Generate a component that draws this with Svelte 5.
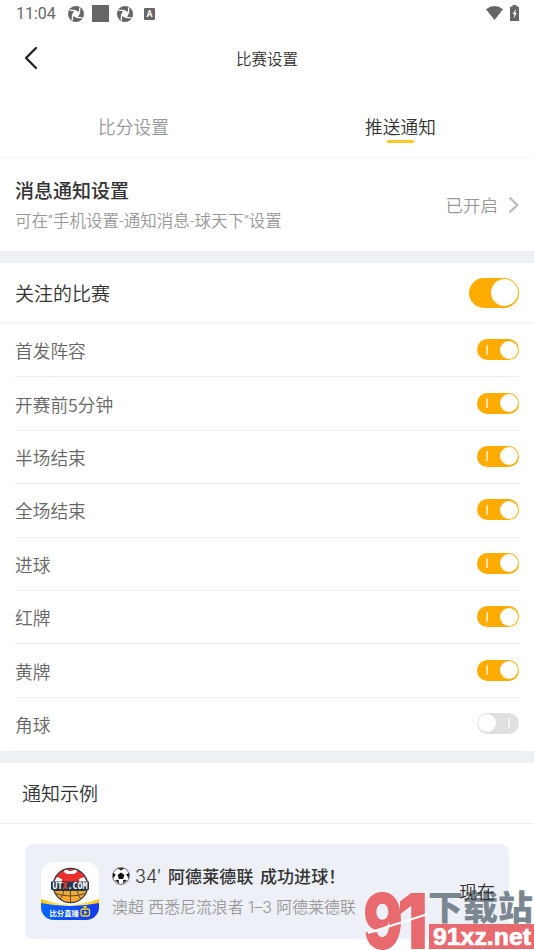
<script lang="ts">
	let master = $state(true);

	let items = $state([
		{ label: '首发阵容', on: true },
		{ label: '开赛前5分钟', on: true },
		{ label: '半场结束', on: true },
		{ label: '全场结束', on: true },
		{ label: '进球', on: true },
		{ label: '红牌', on: true },
		{ label: '黄牌', on: true },
		{ label: '角球', on: false }
	]);
</script>

{#snippet aperture()}
	<svg class="aperture" viewBox="0 0 16 16">
		<circle cx="8" cy="8" r="8" fill="#666" />
		<path d="M6.500 3.800 12.200 6.500 9.500 12.200 3.800 9.500Z" fill="#fff" />
		<path d="M7.500 4.600 1.500 4.200M11.400 7.500 11.800 1.500M8.500 11.400 14.500 11.800M4.600 8.500 4.200 14.500" stroke="#fff" stroke-width="1.300" />
	</svg>
{/snippet}

<div class="screen">
	<div class="status">
		<span class="time">11:04</span>
		{@render aperture()}
		<i class="square"></i>
		{@render aperture()}
		<span class="letter">A</span>
		<svg class="wifi" width="17" height="14" viewBox="0 0 17 14">
			<path d="M0 3.2Q8.5-3 17 3.2L8.5 14Z" fill="#666" />
		</svg>
		<svg width="9" height="16" viewBox="0 0 9 16">
			<path d="M2.5 0h4v1.5H8q1 0 1 1V16H0V2.500q0-1 1-1h1.500Z" fill="#666" />
			<path d="M5.800 4 2.700 9h1.700L3.800 13.500 6.800 7.800H5.200Z" fill="#fff" />
		</svg>
	</div>

	<header>
		<svg class="back" width="14" height="24" viewBox="0 0 14 24">
			<path d="M12 2 2 12 12 22" fill="none" stroke="#222" stroke-width="2.300" stroke-linecap="round" stroke-linejoin="round" />
		</svg>
		<h1>比赛设置</h1>
	</header>

	<nav>
		<span class="tab">比分设置</span>
		<span class="tab active">推送通知</span>
	</nav>

	<section class="notice">
		<div class="copy">
			<h2>消息通知设置</h2>
			<p>可在“手机设置-通知消息-球天下”设置</p>
		</div>
		<span class="enabled">已开启</span>
		<svg width="11" height="18" viewBox="0 0 11 18">
			<path d="M1.500 1.500 9.300 9 1.500 16.500" fill="none" stroke="#bbb" stroke-width="2.200" />
		</svg>
	</section>

	<div class="band"></div>

	<section class="follow">
		<span>关注的比赛</span>
		<button class="switch large" class:on={master} onclick={() => (master = !master)} aria-label="关注的比赛"></button>
	</section>

	<ul>
		{#each items as item}
			<li>
				<span>{item.label}</span>
				<button class="switch" class:on={item.on} onclick={() => (item.on = !item.on)} aria-label={item.label}></button>
			</li>
		{/each}
	</ul>

	<div class="band"></div>

	<h3>通知示例</h3>

	<div class="card">
		<svg class="logo" width="58" height="58" viewBox="0 0 58 58">
			<defs>
				<clipPath id="tile"><rect width="58" height="58" rx="13" /></clipPath>
				<clipPath id="ball"><circle cx="29.500" cy="23.500" r="17" /></clipPath>
				<linearGradient id="blue"><stop stop-color="#0864ff" /><stop offset="1" stop-color="#123bf0" /></linearGradient>
				<linearGradient id="gold"><stop stop-color="#ffc400" /><stop offset=".5" stop-color="#fff6c0" /><stop offset="1" stop-color="#ffc400" /></linearGradient>
			</defs>
			<g clip-path="url(#tile)">
				<rect width="58" height="58" fill="#fff" />
				<g clip-path="url(#ball)">
					<rect x="12" y="6" width="35" height="36" fill="#f6a92c" />
					<rect x="12" y="6" width="35" height="15" fill="#e9302b" />
					<path d="M24 6q2 3 5.500 3T35 6l1 4-3 2h-7l-3-2ZM13 20l3-5 5 2v3ZM46 20l-3-5-5 2v3Z" fill="#fff" />
					<path d="M29.500 27v14M23 27q-1 8-5 11M36 27q1 8 5 11M13 31q16 6 33 0" fill="none" stroke="#5b4a35" stroke-width="1" />
				</g>
				<circle cx="29.500" cy="23.500" r="17.200" fill="none" stroke="#343a45" stroke-width="1.300" />
				<path d="M10 19.500h38v8l-4 1.500H14l-4-1.500Z" fill="#27364b" />
				<text class="brand" x="11.500" y="27" textLength="35" lengthAdjust="spacingAndGlyphs">UT<tspan fill="#ff3b30">X</tspan>.COM</text>
				<path d="M0 37Q29 47 58 37V58H0Z" fill="url(#gold)" />
				<path d="M0 41Q29 47 58 41V58H0Z" fill="url(#blue)" />
				<text class="slogan" x="8.500" y="54" textLength="29.500">比分直播</text>
				<rect x="40" y="47" width="8.500" height="7" rx="2" fill="none" stroke="#ffd21f" stroke-width="1.300" />
				<path d="m42 44 2 2.500 2-2.500M43.300 48.800v3.500l2.900-1.800Z" fill="#ffd21f" stroke="#ffd21f" stroke-width=".5" />
			</g>
		</svg>
		<div class="message">
			<div class="goal">
				<svg width="18" height="18" viewBox="0 0 18 18">
					<circle cx="9" cy="9" r="8.400" fill="#fff" stroke="#444" stroke-width=".8" />
					<path d="m9 5.600 3.400 2.500-1.300 3.900H6.900L5.600 8.100ZM5.600 1.200h6.800L9 3.600ZM.8 6l3 1.300L1.400 11.500ZM17.200 6l-3 1.300 2.400 4.200ZM3 13l3.600-.2.500 4ZM15 13l-3.600-.2-.5 4Z" fill="#111" />
				</svg>
				<span class="minute">34′</span>
				<b>阿德莱德联 成功进球！</b>
			</div>
			<p>澳超 西悉尼流浪者 1–3 阿德莱德联</p>
		</div>
		<span class="now">现在</span>
	</div>

	<svg class="watermark" width="172" height="63" viewBox="0 0 172 63">
		<g class="mark">
			<text x="1" y="62" textLength="40" lengthAdjust="spacingAndGlyphs">9</text>
			<text x="35" y="62" textLength="31" lengthAdjust="spacingAndGlyphs">1</text>
			<path d="M6 46 66 27" fill="none" stroke="#fff" stroke-width="2" />
		</g>
		<text class="site" x="66" y="33" textLength="105" lengthAdjust="spacingAndGlyphs">下载站</text>
		<rect x="67" y="37" width="105" height="25" fill="#e8696e" />
		<text class="domain" x="71" y="58" textLength="98" lengthAdjust="spacingAndGlyphs">91xz.net</text>
	</svg>
</div>

<style>
	:global(body) {
		background: #fff;
	}

	.screen {
		position: relative;
		box-sizing: border-box;
		width: 534px;
		height: 950px;
		overflow: hidden;
		background: #fff;
		color: #333;
		font-family: "Noto Sans CJK SC", sans-serif;
		font-weight: 350;
	}

	h1, h2, h3, p, ul {
		margin: 0;
		padding: 0;
		font-weight: inherit;
	}

	svg {
		display: block;
		flex: none;
	}

	.status {
		display: flex;
		align-items: center;
		height: 27px;
		padding: 0 16px;
		color: #666;
	}

	.time {
		width: 52px;
		font: 400 16px Roboto, sans-serif;
	}

	.aperture {
		width: 16px;
		height: 16px;
	}

	.square {
		width: 17px;
		height: 17px;
		margin: 0 8px;
		background: #666;
	}

	.letter {
		width: 11px;
		height: 12px;
		margin-left: 11px;
		border-radius: 1px;
		background: #666;
		color: #fff;
		font: 700 9px/12px Roboto, sans-serif;
		text-align: center;
	}

	.wifi {
		margin: -2px 7px 0 auto;
	}

	.status svg:last-child {
		margin: -2px -1px 0 0;
	}

	header {
		display: grid;
		grid-template-columns: 40px 1fr 40px;
		align-items: center;
		height: 62px;
	}

	.back {
		margin-left: 24px;
	}

	h1 {
		font-size: 15.5px;
		text-align: center;
	}

	nav {
		display: flex;
		box-sizing: border-box;
		height: 69px;
		padding-top: 19px;
		border-bottom: 1px solid #f8f8f8;
	}

	.tab {
		flex: 1;
		color: #999;
		font-size: 17.7px;
		line-height: 36px;
		text-align: center;
	}

	.active {
		color: #333;
	}

	.active::after {
		content: "";
		display: block;
		width: 27px;
		height: 3px;
		margin: -4px auto 0;
		border-radius: 1px;
		background: #fbca1e;
	}

	.notice {
		display: flex;
		align-items: center;
		box-sizing: border-box;
		height: 93px;
		padding: 0 15px;
	}

	.copy {
		flex: 1;
		padding-top: 2px;
	}

	h2 {
		font-size: 19px;
		font-weight: 500;
		line-height: 32px;
	}

	.copy p {
		color: #999;
		font-family: Roboto, "Noto Sans CJK SC", sans-serif;
		font-size: 16.5px;
		line-height: 32px;
	}

	.enabled {
		margin-right: 10px;
		color: #999;
		font-size: 17.5px;
	}

	.band {
		height: 12px;
		background: #edf1f6;
	}

	.follow {
		display: flex;
		align-items: center;
		justify-content: space-between;
		height: 59px;
		padding: 0 15px;
		border-bottom: 2px solid #f6f6f6;
		font-size: 19px;
	}

	ul {
		padding: 0 15px;
		list-style: none;
	}

	li {
		display: flex;
		align-items: center;
		justify-content: space-between;
		box-sizing: border-box;
		height: 53.4px;
		border-bottom: 1px solid #eee;
		color: #666;
		font-size: 17.7px;
	}

	li:last-child {
		border-color: #f7f7f7;
	}

	.switch {
		display: flex;
		align-items: center;
		flex-direction: row-reverse;
		justify-content: space-between;
		box-sizing: border-box;
		width: 42px;
		height: 21px;
		margin-top: -1px;
		padding: 0 1px;
		border: none;
		border-radius: 11px;
		background: #e0e0e0;
	}

	.switch::before {
		content: "";
		width: 2px;
		height: 10px;
		margin: 0 8px;
		background: rgba(255, 255, 255, 0.65);
	}

	.switch::after {
		content: "";
		width: 18px;
		height: 18px;
		border-radius: 50%;
		background: #fff;
	}

	.on {
		flex-direction: row;
		background: #ffab00;
	}

	.large {
		width: 50px;
		height: 30px;
		margin-top: 0;
		border-radius: 15px;
	}

	.large::before {
		visibility: hidden;
	}

	.large::after {
		width: 27px;
		height: 27px;
	}

	h3 {
		height: 60px;
		padding-left: 22px;
		border-bottom: 1px solid #eee;
		font-size: 19px;
		line-height: 60px;
	}

	.card {
		display: flex;
		box-sizing: border-box;
		width: 484px;
		height: 95px;
		margin: 20px 0 0 25px;
		padding: 18px 14px 0 16px;
		border-radius: 8px;
		background: #edf0f6;
	}

	.message {
		flex: 1;
		margin-left: 13px;
		white-space: nowrap;
	}

	.goal {
		display: flex;
		align-items: center;
		height: 28px;
		font-size: 17px;
	}

	.minute {
		width: 33px;
		margin-left: 5px;
		font-family: Inter, sans-serif;
		font-size: 18px;
	}

	.goal b {
		margin-top: -2px;
		font-weight: 500;
		letter-spacing: 0.1px;
		word-spacing: 2.5px;
	}

	.message p {
		color: #999;
		font-family: Inter, "Noto Sans CJK SC", sans-serif;
		font-size: 15.9px;
		line-height: 36px;
	}

	.now {
		position: relative;
		z-index: 1;
		margin-top: 16px;
		font-size: 18px;
	}

	.brand {
		fill: #fff;
		font: 700 9px "DejaVu Sans Mono", monospace;
	}

	.slogan {
		fill: #fff;
		font-size: 7.4px;
		font-weight: 700;
	}

	.watermark {
		position: absolute;
		left: 362px;
		top: 887px;
	}

	.mark text {
		fill: #e8696e;
		font: 900 77px Inter, sans-serif;
	}

	.site {
		fill: #7b8790;
		font-size: 34px;
		font-weight: 900;
	}

	.domain {
		fill: #fff;
		stroke: #fff;
		stroke-width: 0.7px;
		font: 700 24px "Liberation Sans Narrow", "Liberation Sans", sans-serif;
	}
</style>
